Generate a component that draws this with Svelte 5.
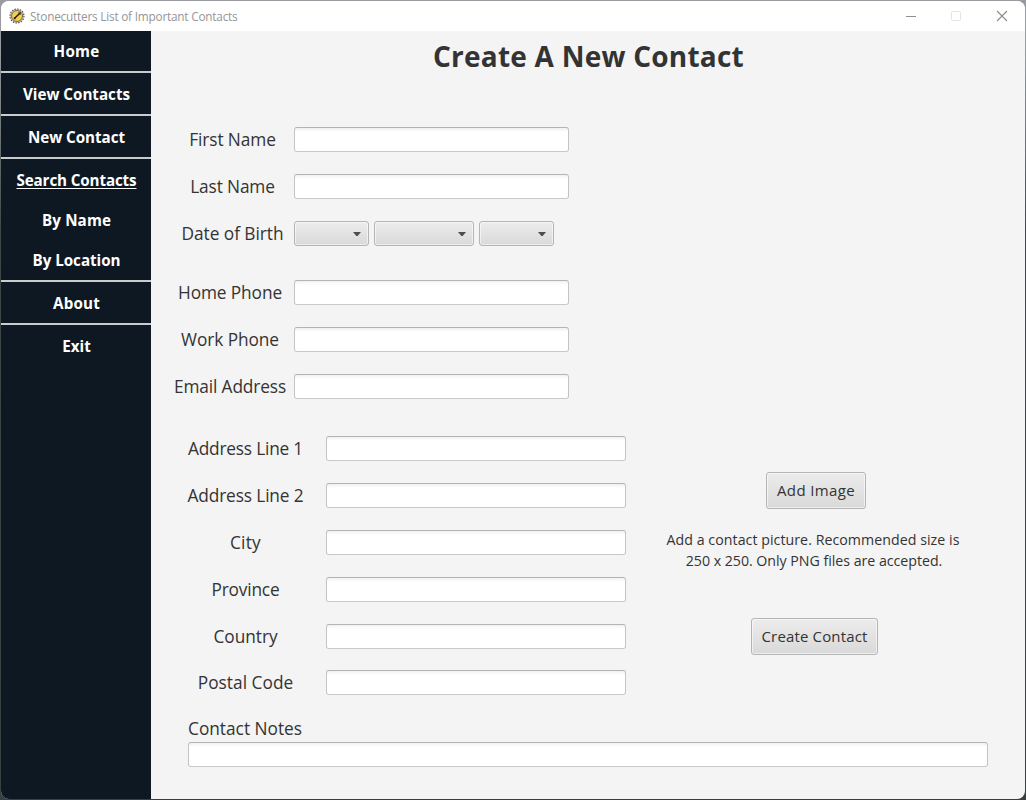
<script>
  const menu = [
    { items: [['Home', 46]] },
    { items: [['View Contacts', 107]] },
    { items: [['New Contact', 97]] },
    { items: [['Search Contacts', 120, true], ['By Name', 69], ['By Location', 88]] },
    { items: [['About', 47]] },
    { items: [['Exit', 28.5]] },
  ];
  const personal = [['First Name', 86.5], ['Last Name', 84.5]];
  const reach = [['Home Phone', 104], ['Work Phone', 98], ['Email Address', 112]];
  const address = [
    ['Address Line 1', 115],
    ['Address Line 2', 116],
    ['City', 31],
    ['Province', 68],
    ['Country', 64],
    ['Postal Code', 95.5],
  ];

  // Tracks the text so that it fills the given width.
  function fit(node, width) {
    const own = node.getBoundingClientRect().width;
    const gap = (width - own) / node.textContent.length;
    node.style.letterSpacing = `${gap}px`;
  }
</script>

<div class="desktop">
  <div class="window">
    <header class="titlebar">
      <svg class="logo" width="16" height="16" viewBox="0 0 16 16">
        <circle cx="8" cy="8" r="7" fill="#d6d3cb" stroke="#4a4945" stroke-width="1.1" stroke-dasharray="1.5 1.25" />
        <circle cx="8" cy="8" r="5.5" fill="#f5cb50" stroke="#5b5130" stroke-width="0.8" />
        <path d="M5.2 10.8 10.5 5.5" stroke="#181712" stroke-width="1.4" />
        <path d="M9.4 5 11.2 4.8 11 6.6M4.9 9.7 6.3 11.1" stroke="#181712" stroke-width="1.1" fill="none" />
      </svg>
      <span class="caption"><span class="t" use:fit={207.5}>Stonecutters List of Important Contacts</span></span>
      <div class="controls">
        <svg width="12" height="12" viewBox="0 0 12 12"><path d="M1 6.5H11" stroke="#8f8f8f" /></svg>
        <svg width="12" height="12" viewBox="0 0 12 12"><rect x="1.5" y="1.5" width="9" height="9" rx="1" fill="none" stroke="#e4e4e4" /></svg>
        <svg width="12" height="12" viewBox="0 0 12 12"><path d="M1 1 11 11M11 1 1 11" stroke="#8c8c8c" stroke-width="1.1" /></svg>
      </div>
    </header>

    <div class="body">
      <nav>
        {#each menu as group}
          <div class="group">
            {#each group.items as [name, width, underlined]}
              <a class:underlined><span class="t" use:fit={width}>{name}</span></a>
            {/each}
          </div>
        {/each}
      </nav>

      <main>
        <h1><span class="t" use:fit={311}>Create A New Contact</span></h1>

        <section class="personal">
          {#each personal as [name, width]}
            <div class="row">
              <span class="label"><span class="t" use:fit={width}>{name}</span></span>
              <input type="text" aria-label={name} />
            </div>
          {/each}
          <div class="row">
            <span class="label"><span class="t" use:fit={102}>Date of Birth</span></span>
            <div class="combos">
              {#each ['', 'wide', ''] as size}
                <div class="combo {size}">
                  <svg width="8" height="4" viewBox="0 0 8 4"><path d="M0 0H8L4.6 4H3.4Z" fill="#4d4d4d" /></svg>
                </div>
              {/each}
            </div>
          </div>
        </section>

        <section class="reach">
          {#each reach as [name, width]}
            <div class="row">
              <span class="label"><span class="t" use:fit={width}>{name}</span></span>
              <input type="text" aria-label={name} />
            </div>
          {/each}
        </section>

        <div class="split">
          <section class="address">
            {#each address as [name, width]}
              <div class="row">
                <span class="label"><span class="t" use:fit={width}>{name}</span></span>
                <input type="text" aria-label={name} />
              </div>
            {/each}
          </section>
          <aside>
            <button class="add"><span class="t" use:fit={78}>Add Image</span></button>
            <p>
              <span class="t" use:fit={293}>Add a contact picture. Recommended size is</span>
              <span class="t second" use:fit={258.5}>250 x 250. Only PNG files are accepted.</span>
            </p>
            <button class="create"><span class="t" use:fit={106}>Create Contact</span></button>
          </aside>
        </div>

        <section class="notes">
          <span class="label"><span class="t" use:fit={114}>Contact Notes</span></span>
          <input type="text" aria-label="Contact Notes" />
        </section>
      </main>
    </div>
  </div>
</div>

<style>
  :global(body) { margin: 0; }
  .desktop {
    box-sizing: border-box;
    width: 1026px;
    height: 800px;
    padding: 1px;
    overflow: hidden;
    background: linear-gradient(#989b9f 0, #989b9f 50px, #3f4848 230px, #37413f 100%);
    font-family: "Open Sans", "Noto Sans", sans-serif;
    color: #333;
  }
  .window {
    width: 1024px;
    height: 798px;
    border-radius: 8px;
    overflow: hidden;
    background: #f4f4f4;
  }
  .t { display: inline-block; white-space: nowrap; }
  .titlebar {
    display: flex;
    align-items: center;
    height: 30px;
    padding-left: 8px;
    background: #fff;
    box-sizing: border-box;
  }
  .caption { margin-left: 5px; font-size: 11.8px; line-height: 16px; color: #959595; flex: 1; }
  .logo { display: block; margin-top: -1px; }
  .controls { display: flex; gap: 33px; margin-right: 17px; margin-top: -1px; }
  .controls svg { display: block; }
  .controls svg:last-child { margin-left: 1px; }
  .body { display: flex; height: 768px; }
  nav { width: 150px; background: #0e1823; flex: none; }
  .group { border-bottom: 2px solid #c9cccd; padding-top: 1px; }
  .group:first-child { padding-top: 0; }
  .group:last-child { border-bottom: 0; }
  nav a {
    display: flex;
    justify-content: center;
    align-items: center;
    height: 40px;
    padding-left: 1px;
    color: #fff;
    font-size: 15.2px;
    font-weight: 700;
  }
  .underlined .t { text-decoration: underline; text-decoration-thickness: 1px; text-underline-offset: 2px; }
  main { flex: 1; display: flex; flex-direction: column; }
  h1 {
    margin: 4px 0 1px;
    padding-left: 1px;
    height: 42px;
    font-size: 28px;
    line-height: 42px;
    text-align: center;
    font-weight: 700;
  }
  .row { display: flex; align-items: center; height: 25px; }
  .label { font-size: 17.3px; line-height: 25px; text-align: center; flex: none; }
  section { display: flex; flex-direction: column; gap: 22px; }
  input {
    display: block;
    box-sizing: border-box;
    height: 25px;
    width: 275px;
    margin: 0;
    padding: 0 7px;
    border: 1px solid #c3c3c3;
    border-top-color: #b4b4b4;
    border-bottom-color: #c9c9c9;
    border-radius: 3px;
    background: linear-gradient(#f1f1f1, #fff 4px);
    outline: 0;
  }
  .personal { margin-top: 49px; padding-left: 20px; }
  .personal .label { width: 123px; }
  .reach { margin-top: 34px; padding-left: 15px; }
  .reach .label { width: 128px; }
  .combos { display: flex; gap: 5px; }
  .combo, button {
    box-sizing: border-box;
    border: 1px solid #b5b5b5;
    border-radius: 3px;
    background: linear-gradient(#ececec, #d9d9d9);
    box-shadow: inset 0 0 0 1px rgba(255, 255, 255, 0.55);
  }
  .combo {
    display: flex;
    align-items: center;
    justify-content: flex-end;
    width: 75px;
    height: 25px;
    padding-right: 7px;
  }
  .combo svg { display: block; margin-top: 1px; }
  .wide { width: 100px; }
  .split { display: flex; margin-top: 37px; }
  .address { padding-left: 14px; }
  .address .label { width: 161px; }
  .address input { width: 300px; }
  .address .row:last-child { margin-top: -1px; }
  aside { display: flex; flex-direction: column; align-items: center; width: 378px; padding-top: 36px; }
  button {
    height: 37px;
    padding: 0 0 2px;
    font: 15px "Open Sans", "Noto Sans", sans-serif;
    color: #333;
    display: flex;
    align-items: center;
    justify-content: center;
  }
  .add { width: 100px; margin-left: 2px; }
  .create { width: 127px; margin-right: 1px; }
  p {
    display: flex;
    flex-direction: column;
    align-items: center;
    margin: 20px 4px 47px 0;
    font-size: 14.2px;
    line-height: 21px;
  }
  .second { padding-left: 2px; }
  .notes { margin: 21px 0 0 37px; gap: 1px; }
  .notes .label { text-align: left; }
  .notes input { width: 800px; }
</style>
